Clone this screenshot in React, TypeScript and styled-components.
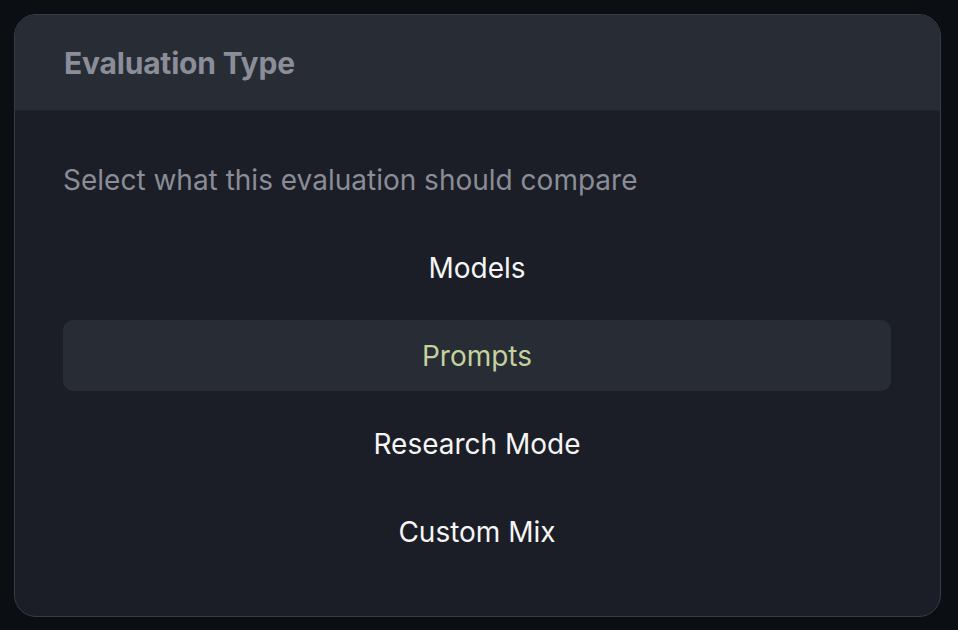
import React from "react";
import styled, { createGlobalStyle } from "styled-components";

const Global = createGlobalStyle`
  html, body { margin: 0; padding: 0; background: #0b0e13; }
  body { font-family: Inter, "Noto Sans", sans-serif; -webkit-font-smoothing: antialiased; }
  #root { min-height: 100vh; }
`;

const Page = styled.div`
  box-sizing: border-box;
  width: 958px;
  height: 630px;
  padding: 14px 17px 13px 14px;
  background: #0b0e13;
`;

const Card = styled.div`
  box-sizing: border-box;
  height: 100%;
  display: flex;
  flex-direction: column;
  background: #1b1e26;
  border: 1px solid #383b47;
  border-radius: 22px;
  overflow: hidden;
`;

const Header = styled.div`
  height: 96px;
  flex: none;
  display: flex;
  align-items: center;
  padding: 0 49px;
  background: #282c35;
  border-bottom: 1px solid #22252d;
  box-sizing: border-box;
`;

const Title = styled.h2`
  margin: 0;
  font-size: 30px;
  font-weight: 700;
  color: #8b8e99;
  letter-spacing: -0.2px;
`;

const Body = styled.div`
  padding: 53px 49px 0 48px;
  display: flex;
  flex-direction: column;
`;

const Subtitle = styled.p`
  margin: 0 0 36px;
  font-size: 28px;
  line-height: 32px;
  color: #8a8d97;
`;

const Options = styled.div`
  display: flex;
  flex-direction: column;
  gap: 17px;
`;

const Option = styled.div<{ $active?: boolean }>`
  height: 71px;
  display: flex;
  align-items: center;
  justify-content: center;
  border-radius: 10px;
  font-size: 28px;
  font-weight: 400;
  background: ${(p) => (p.$active ? "#282c35" : "transparent")};
  color: ${(p) => (p.$active ? "#c3d19d" : "#f5f5f5")};
`;

const items = ["Models", "Prompts", "Research Mode", "Custom Mix"];

export default function App() {
  return (
    <>
      <Global />
      <Page>
        <Card>
          <Header>
            <Title>Evaluation Type</Title>
          </Header>
          <Body>
            <Subtitle>Select what this evaluation should compare</Subtitle>
            <Options>
              {items.map((it) => (
                <Option key={it} $active={it === "Prompts"}>
                  {it}
                </Option>
              ))}
            </Options>
          </Body>
        </Card>
      </Page>
    </>
  );
}
